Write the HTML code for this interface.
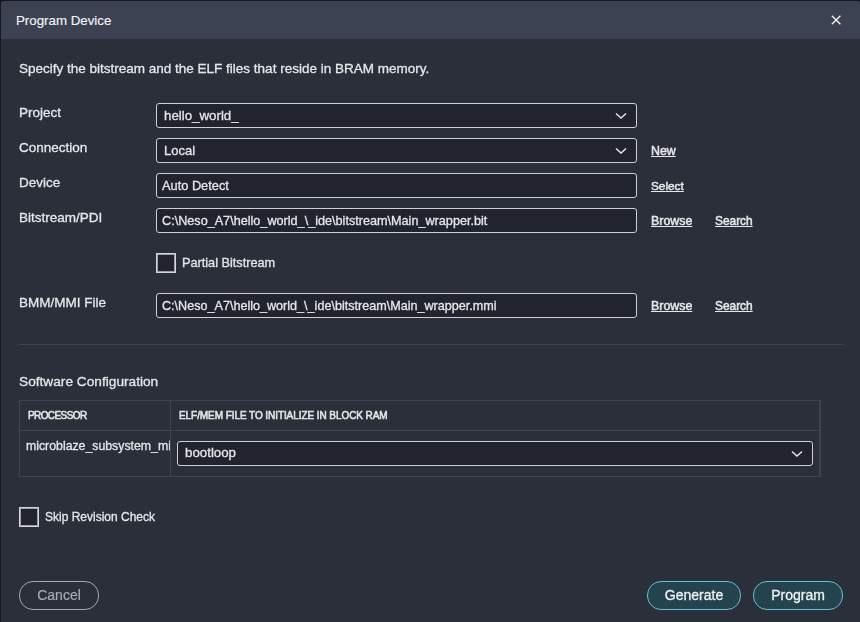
<!DOCTYPE html>
<html><head><meta charset="utf-8">
<style>
html,body{margin:0;padding:0;}
body{width:860px;height:622px;overflow:hidden;background:#17181d;position:relative;font-family:"Liberation Sans",sans-serif;color:#e6e7ea;}
.dlg{position:absolute;left:1px;top:1px;width:859px;height:621px;background:#2b2f3a;border-radius:3px 3px 0 0;overflow:hidden;}
.hdr{position:absolute;left:0;top:0;width:859px;height:38px;background:#3c4252;}
.t{position:absolute;white-space:nowrap;line-height:16px;}
.inp{position:absolute;box-sizing:border-box;height:25px;background:#21242e;border:1px solid #cdd0d5;border-radius:3px;}
.chev{position:absolute;}
.lay{position:absolute;left:0;top:0;width:859px;height:621px;will-change:transform;}
.lay .t{-webkit-text-stroke:0.3px #e6e7ea;}
.lnk{position:absolute;white-space:nowrap;text-decoration:underline;line-height:16px;-webkit-text-stroke:0.5px #e6e7ea;}
.cb{position:absolute;box-sizing:border-box;width:20px;height:20px;background:#21242e;border:1px solid #d4d6da;box-shadow:inset 0 0 0 1px #9da0a7;}
.sep{position:absolute;left:18px;top:343px;width:825px;height:1px;background:#3f4353;}
.btn{position:absolute;box-sizing:border-box;height:29px;border-radius:14px;text-align:center;font-size:14px;line-height:27px;}
</style></head><body>
<div class="dlg">
  <div class="hdr"></div>
  <div class="t" style="left:15px;top:12px;font-size:13.3px;color:#f4f4f6;-webkit-text-stroke:0.15px #f4f4f6;">Program Device</div>
  <svg style="position:absolute;left:829px;top:13px" width="12" height="12" viewBox="0 0 12 12"><path d="M1.8 1.8 L10.4 10.2 M10.4 1.8 L1.8 10.2" stroke="#f4f4f4" stroke-width="1.3"/></svg>
  <div class="lay">

  <div class="t" style="left:18px;top:60px;font-size:13.5px;">Specify the bitstream and the ELF files that reside in BRAM memory.</div>

  <div class="t" style="left:18px;top:104px;font-size:13.5px;">Project</div>
  <div class="inp" style="left:155px;top:102px;width:481px;"></div>
  <div class="t" style="left:163px;top:107px;font-size:13.3px;">hello_world_</div>
  <svg class="chev" style="left:614px;top:110px" width="13" height="9" viewBox="0 0 13 9"><path d="M1 2.4 L6 7.1 L11 2.4" fill="none" stroke="#e8e8e8" stroke-width="1.4"/></svg>

  <div class="t" style="left:18px;top:139px;font-size:13.5px;">Connection</div>
  <div class="inp" style="left:155px;top:137px;width:481px;"></div>
  <div class="t" style="left:163px;top:142px;font-size:13px;">Local</div>
  <svg class="chev" style="left:614px;top:145px" width="13" height="9" viewBox="0 0 13 9"><path d="M1 2.4 L6 7.1 L11 2.4" fill="none" stroke="#e8e8e8" stroke-width="1.4"/></svg>
  <a class="lnk" style="left:650px;top:142px;font-size:12.4px;">New</a>

  <div class="t" style="left:18px;top:174px;font-size:13.5px;">Device</div>
  <div class="inp" style="left:155px;top:172px;width:481px;"></div>
  <div class="t" style="left:161px;top:177px;font-size:12.8px;">Auto Detect</div>
  <a class="lnk" style="left:650px;top:177px;font-size:11.8px;">Select</a>

  <div class="t" style="left:18px;top:209px;font-size:13.5px;">Bitstream/PDI</div>
  <div class="inp" style="left:155px;top:207px;width:481px;"></div>
  <div class="t" style="left:161px;top:212px;font-size:12.65px;">C:\Neso_A7\hello_world_\_ide\bitstream\Main_wrapper.bit</div>
  <a class="lnk" style="left:650px;top:212px;font-size:12.4px;">Browse</a>
  <a class="lnk" style="left:714px;top:212px;font-size:11.9px;">Search</a>

  <div class="cb" style="left:155px;top:252px;"></div>
  <div class="t" style="left:181px;top:254px;font-size:12.7px;">Partial Bitstream</div>

  <div class="t" style="left:18px;top:294px;font-size:13.5px;">BMM/MMI File</div>
  <div class="inp" style="left:155px;top:292px;width:481px;"></div>
  <div class="t" style="left:161px;top:297px;font-size:12.6px;">C:\Neso_A7\hello_world_\_ide\bitstream\Main_wrapper.mmi</div>
  <a class="lnk" style="left:650px;top:297px;font-size:12.4px;">Browse</a>
  <a class="lnk" style="left:714px;top:297px;font-size:11.9px;">Search</a>

  <div class="sep"></div>
  <div style="position:absolute;left:18px;top:399px;width:802px;height:77px;box-sizing:border-box;border:1px solid #3f4353;"></div>
  <div style="position:absolute;left:18px;top:429px;width:802px;height:1px;background:#3f4353;"></div>
  <div style="position:absolute;left:169px;top:399px;width:1px;height:77px;background:#3f4353;"></div>
  <div style="position:absolute;left:818px;top:399px;width:1px;height:77px;background:#3f4353;"></div>

  <div class="t" style="left:18px;top:373px;font-size:13.7px;">Software Configuration</div>

  <div class="t" style="left:27px;top:407px;font-size:10px;letter-spacing:-0.6px;-webkit-text-stroke:0.55px #e4e5e8;">PROCESSOR</div>
  <div class="t" style="left:178px;top:407px;font-size:10px;letter-spacing:-0.07px;-webkit-text-stroke:0.55px #e4e5e8;">ELF/MEM FILE TO INITIALIZE IN BLOCK RAM</div>
  <div class="t" style="left:25px;top:437px;font-size:12.3px;width:144px;overflow:hidden;">microblaze_subsystem_microblaze_0</div>
  <div class="inp" style="left:176px;top:440px;width:636px;"></div>
  <div class="t" style="left:184px;top:444px;font-size:13.3px;">bootloop</div>
  <svg class="chev" style="left:790px;top:448px" width="13" height="9" viewBox="0 0 13 9"><path d="M1 2.4 L6 7.1 L11 2.4" fill="none" stroke="#e8e8e8" stroke-width="1.4"/></svg>

  <div class="cb" style="left:18px;top:506px;"></div>
  <div class="t" style="left:44px;top:508px;font-size:12px;">Skip Revision Check</div>

  <div class="btn" style="left:18px;top:580px;width:80px;border:1px solid #a6a8ae;color:#a8aaaf;-webkit-text-stroke:0.2px #a8aaaf;">Cancel</div>
  <div class="btn" style="left:646px;top:580px;width:94px;border:1px solid #60c2d2;background:#23434f;color:#f2f2f2;-webkit-text-stroke:0.3px #f2f2f2;">Generate</div>
  <div class="btn" style="left:752px;top:580px;width:90px;border:1px solid #60c2d2;background:#23434f;color:#f2f2f2;-webkit-text-stroke:0.3px #f2f2f2;">Program</div>
  </div>
</div>
</body></html>
